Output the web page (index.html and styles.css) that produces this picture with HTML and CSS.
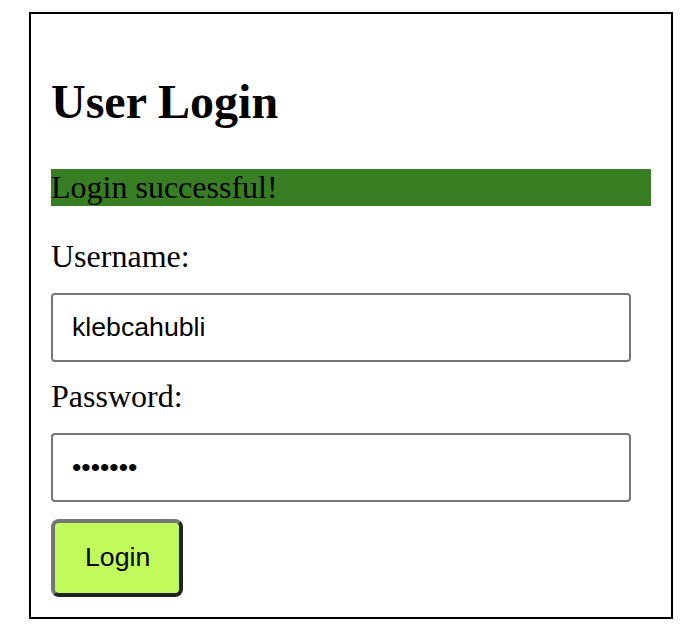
FILE: index.html
```html
<!DOCTYPE html>
<html lang="en">
<head>
<meta charset="utf-8">
<title>User Login</title>
<link rel="stylesheet" href="styles.css">
</head>
<body>
<div class="login-box">
  <h1 class="title">User Login</h1>
  <div class="message">Login successful!</div>
  <form class="login-form" onsubmit="return false;">
    <label class="field-label" for="username">Username:</label>
    <input class="field-input" type="text" id="username" value="klebcahubli">
    <label class="field-label" for="password">Password:</label>
    <input class="field-input" type="password" id="password" value="1234567">
    <button class="login-button" type="submit">Login</button>
  </form>
</div>
</body>
</html>
```
FILE: styles.css
```css
html, body {
  margin: 0;
  padding: 0;
  background: #ffffff;
}

body {
  font-family: "Liberation Serif", "Times New Roman", serif;
  font-size: 32px;
  color: #000000;
}

.login-box {
  width: 600px;
  margin: 12px 0 0 29px;
  padding: 20px;
  border: 2px solid #000000;
}

.title {
  font-size: 48px;
  font-weight: bold;
  margin: 0.83em 0;
}

.message {
  background: #387e22;
  color: #000000;
  margin: 0 0 32px 0;
}

.login-form {
  display: flex;
  flex-direction: column;
  align-items: flex-start;
  margin: 0;
}

.field-label {
  display: block;
  margin: 0 0 18px 0;
}

.field-input {
  box-sizing: border-box;
  width: 580px;
  height: 69px;
  margin: 0 0 16px 0;
  padding: 0 19px;
  border: 2px solid #767676;
  border-radius: 4px;
  font-family: "Liberation Sans", Arial, sans-serif;
  font-size: 26.67px;
  color: #000000;
  background: #ffffff;
  outline: none;
}

.login-form .field-input:last-of-type {
  margin-bottom: 17px;
}

.login-button {
  box-sizing: border-box;
  width: 132px;
  height: 78px;
  padding: 0 30px;
  border-style: solid;
  border-width: 4px;
  border-color: #767676 #222222 #222222 #767676;
  border-radius: 8px;
  background: #c1fa5b;
  font-family: "Liberation Sans", Arial, sans-serif;
  font-size: 26.67px;
  color: #000000;
}
```
